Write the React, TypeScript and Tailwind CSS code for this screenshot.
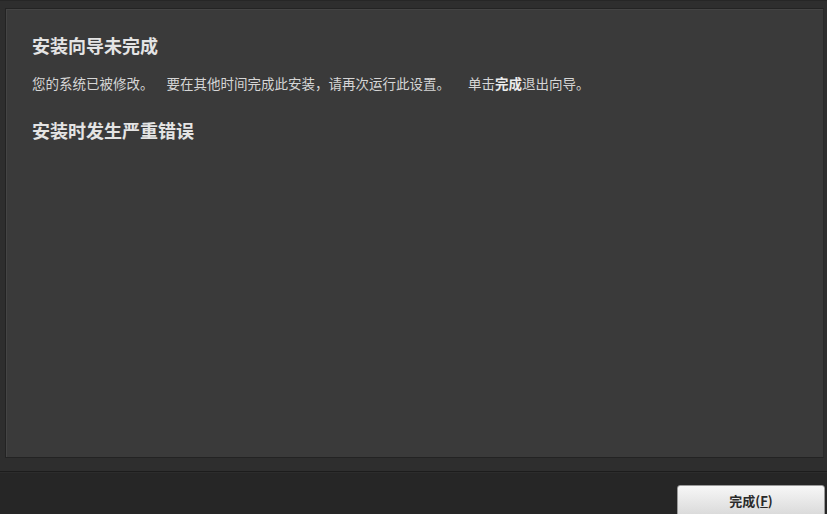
import React from "react";

export default function App() {
  const font = { fontFamily: '"Noto Sans CJK SC", "Noto Sans", sans-serif' };
  return (
    <div className="w-[827px] h-[514px] flex flex-col overflow-hidden bg-[#2e2e2e]" style={font}>
      <div className="h-[471px] shrink-0 flex flex-col pt-[7px] pl-[5px] pr-[3px] pb-[13px] bg-[#2e2e2e] border-t border-[#262626]">
        <div className="flex-1 bg-[#3a3a3a] border border-t-[#232323] border-l-[#232323] border-r-[#2a2a2a] border-b-[#232323] shadow-[inset_1px_1px_0_#444] pl-[26px] pt-[24px]">
          <div className="text-[18px] leading-[24px] font-bold text-[#e4e4e4]">安装向导未完成</div>
          <div className="mt-[17px] text-[13.5px] leading-[18px] text-[#d6d6d6] whitespace-nowrap">
            <span>您的系统已被修改。</span>
            <span className="ml-[13px]">要在其他时间完成此安装，请再次运行此设置。</span>
            <span className="ml-[18px]">单击<span className="font-bold text-[#ececec]">完成</span>退出向导。</span>
          </div>
          <div className="mt-[26px] text-[18px] leading-[24px] font-bold text-[#e4e4e4]">安装时发生严重错误</div>
        </div>
      </div>
      <div className="h-px shrink-0 bg-[#1c1c1c]" />
      <div className="flex-1 min-h-0 overflow-hidden bg-[#262626] border-t border-[#2c2c2c] flex justify-end items-start pt-[12px] pr-[2px]">
        <div className="w-[148px] h-[32px] shrink-0 rounded-[3px] border border-[#9a9a9a] bg-gradient-to-b from-[#f7f7f7] to-[#d9d9d9] flex items-start justify-center pt-[7px] text-[13px] leading-[16px] font-bold text-[#2a2a2a]">
          完成(<span className="underline">F</span>)
        </div>
      </div>
    </div>
  );
}
